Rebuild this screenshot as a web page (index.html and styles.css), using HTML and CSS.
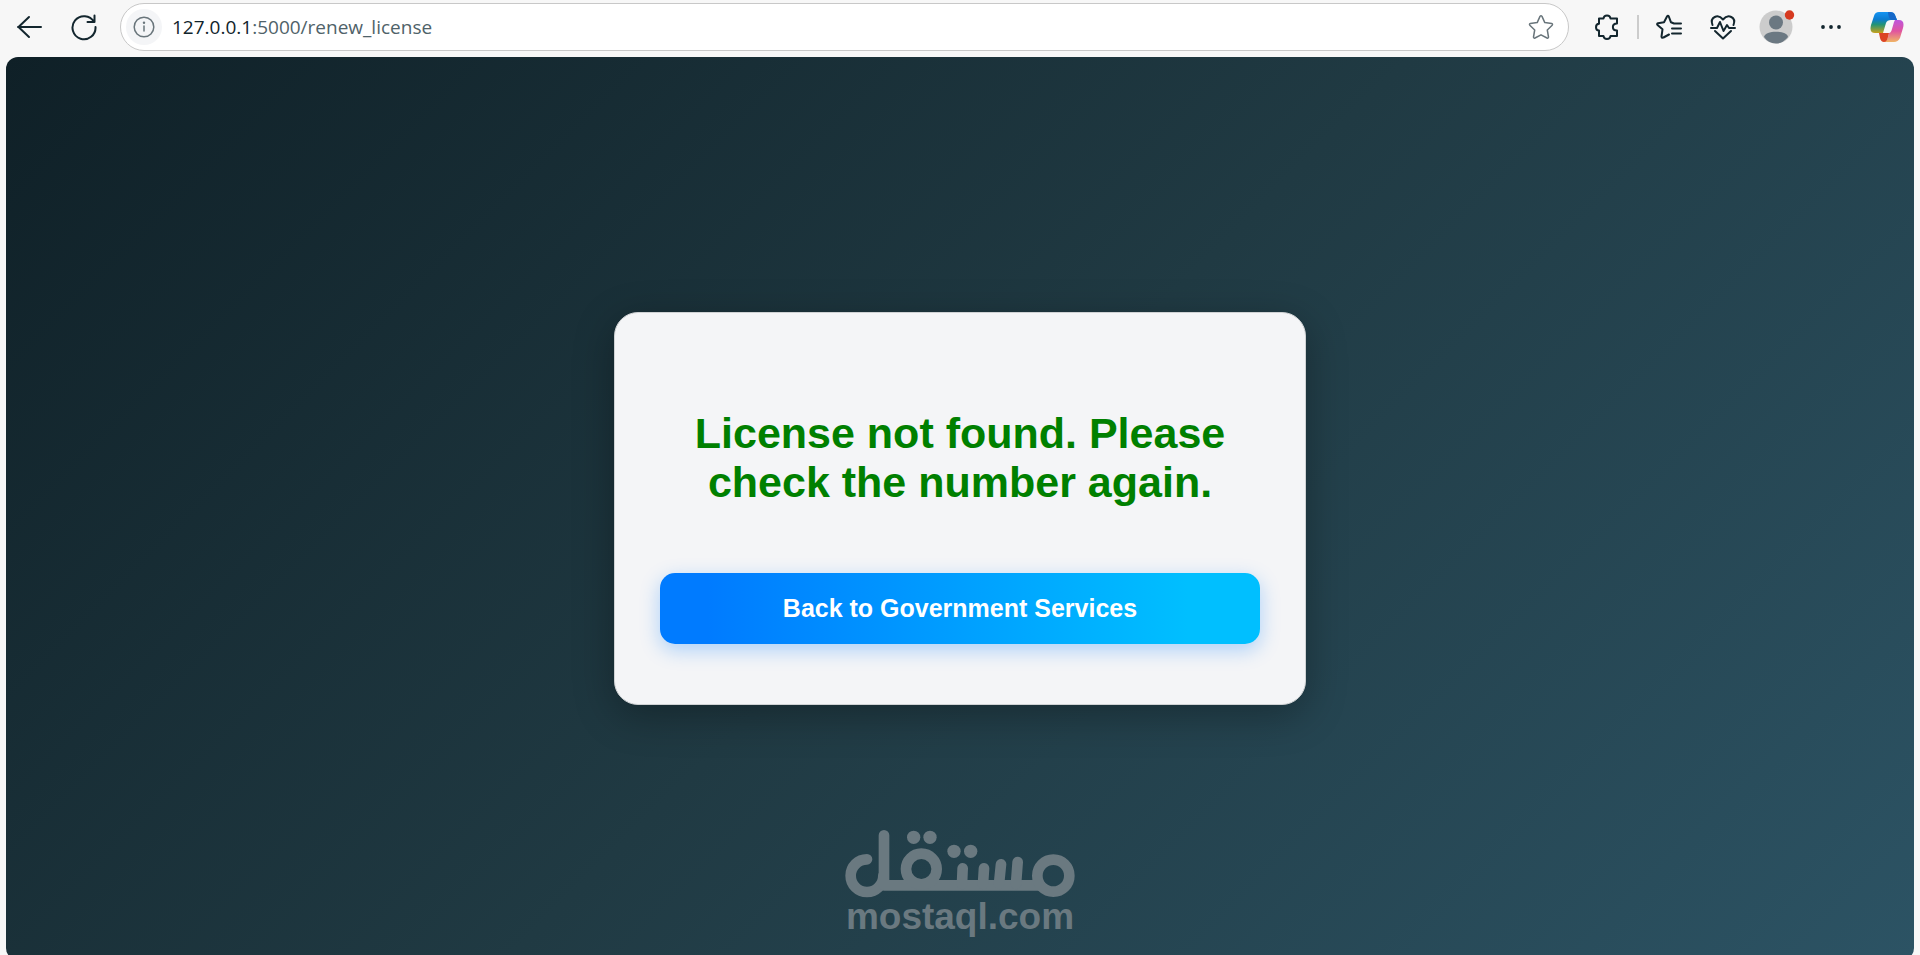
FILE: index.html
```html
<!DOCTYPE html>
<html lang="en">
<head>
<meta charset="utf-8">
<title>Renew License</title>
<link rel="stylesheet" href="styles.css">
</head>
<body>
<header class="toolbar">
  <button class="tool" aria-label="Back"><svg width="28" height="28" viewBox="0 0 28 28"><path d="M25 14H2M13 4L2.500 14L13 24"/></svg></button>
  <button class="tool" aria-label="Refresh"><svg width="28" height="28" viewBox="0 0 28 28"><path d="M24 9A11.500 11.500 0 1 0 25.500 14M24.500 2.500V9H17.500"/></svg></button>
  <form class="address">
    <button type="button" class="info" aria-label="Site information"><svg width="22" height="22" viewBox="0 0 22 22"><circle cx="11" cy="11" r="9.800"/><path d="M11 10V15"/><circle class="solid" cx="11" cy="6.800" r="1.200"/></svg></button>
    <span class="url"><b>127.0.0.1</b>:5000/renew_license</span>
    <button type="button" class="favorite" aria-label="Add to favorites"><svg width="26" height="26" viewBox="0 0 26 26"><path d="M12 2.400Q13 1 14 2.400L16.800 8.600L23.700 9.500Q25 10 24.200 11.200L19.300 16L20.500 23Q20.400 24.500 19 24L13 20.800L7 24Q5.600 24.500 5.500 23L6.700 16L1.800 11.200Q1 10 2.300 9.500L9.200 8.600Z"/></svg></button>
  </form>
  <nav class="actions">
    <button class="tool" aria-label="Extensions"><svg width="28" height="28" viewBox="0 0 28 28"><path d="M6 5.500H10.500C11 1.500 17 1.500 17.500 5.500H24V10.500C18.500 10.500 18.500 17.500 24 17.500V23H17.500C17 27 11 27 10.500 23H6V17.500C2 17.500 2 11 6 10.800V5.500Z"/></svg></button>
    <span class="divider"></span>
    <button class="tool" aria-label="Favorites"><svg width="28" height="28" viewBox="0 0 28 28"><path d="M26 10.500H19L16 9.300L13.800 3.500Q13 1.800 12 3.500L9 9.300L3 10.200Q1.500 10.700 2.500 12L7.500 16.300L6.500 23.500Q6.800 25.500 8.500 24.500L14 21.500M17 15.500H26M17 20.500H26"/></svg></button>
    <button class="tool" aria-label="Browser essentials"><svg width="28" height="28" viewBox="0 0 28 28"><path d="M3.500 12C0.500 4 9 0.500 14 6.500C19 0.500 27.500 4 24.500 12M2 15H8L11 9L14.500 18L18 12L20 15H26M6 18L14 25.500L22 18"/></svg></button>
    <button class="tool profile" aria-label="Profile"><svg width="36" height="36" viewBox="0 0 36 36"><circle cx="17" cy="18" r="16.500" fill="#ccc"/><circle cx="17" cy="13.500" r="7" fill="#6b7882"/><path d="M5 28C6 21 28 21 29 28Q24 34.500 17 34.500Q9 34 5 28Z" fill="#6b7882"/><circle cx="30.500" cy="6" r="4.700" fill="#d63a20"/></svg></button>
    <button class="tool more" aria-label="More"><svg width="28" height="28" viewBox="0 0 28 28"><g class="solid"><circle cx="6" cy="14" r="1.900"/><circle cx="14" cy="14" r="1.900"/><circle cx="22" cy="14" r="1.900"/></g></svg></button>
    <button class="tool copilot" aria-label="Copilot"><svg width="34" height="32" viewBox="0 0 34 32">
      <defs>
        <linearGradient id="cool" x2="0" y2="1"><stop offset="0" stop-color="#1594f2"/><stop offset=".35" stop-color="#0c7cd0"/><stop offset=".6" stop-color="#239475"/><stop offset="1" stop-color="#c8a21c"/></linearGradient>
        <linearGradient id="warm" x2="0" y2="1"><stop offset="0" stop-color="#bd55de"/><stop offset=".5" stop-color="#e0549f"/><stop offset="1" stop-color="#f0b565"/></linearGradient>
      </defs>
      <path d="M9 1H20Q24 1 25 4L27 9H21Q17 9 16 12L13 22H5Q-1 22 1 14L4 5Q5 1 9 1Z" fill="url(#cool)"/>
      <path d="M18 1H20Q24 1 25 4L27 9H21Q18 6 18 1Z" fill="#1668c8"/>
      <path d="M25 9H29Q35 9 33 17L30 27Q28 31 24 31H14Q17 30 18 26L19 22Q21 22 22 18L24 11Z" fill="url(#warm)"/>
      <path d="M9 22H19L18 26Q17 31 14 31Q11 31 10 27Z" fill="#dc4424"/>
    </svg></button>
  </nav>
</header>
<main class="page">
  <section class="card">
    <h1 class="message">License not found. Please check the number again.</h1>
    <a class="back" href="#">Back to Government Services</a>
  </section>
  <div class="watermark">
    <svg width="230" height="68" viewBox="75 60 690 204" role="img" aria-label="مستقل">
      <g class="strokes">
        <path d="M141 148A49 49 0 1 0 190 197"/><path d="M192 76V226H660" stroke-linejoin="round"/>
        <circle cx="700" cy="197" r="48"/><circle cx="304" cy="177" r="46"/>
        <path d="M593 156L588 222M543 163L537 222M492 175L489 222M428 175L426 222"/>
      </g>
      <g class="dots"><circle cx="281" cy="82" r="20"/><circle cx="330" cy="82" r="20"/><circle cx="402" cy="124" r="20"/><circle cx="452" cy="124" r="20"/></g>
    </svg>
    <span class="domain">mostaql.com</span>
  </div>
</main>
</body>
</html>
```
FILE: styles.css
```css
* { box-sizing: border-box; }

body {
  margin: 0;
  height: 100vh;
  overflow: hidden;
  display: flex;
  flex-direction: column;
  background: #f7f7f7;
  font-family: "Liberation Sans", Arial, sans-serif;
}

button {
  padding: 0;
  border: 0;
  background: none;
  display: flex;
  align-items: center;
  justify-content: center;
}

svg { display: block; }

.toolbar {
  flex: none;
  display: flex;
  align-items: center;
  height: 57px;
  padding: 0 16px 3px;
}

.tool {
  width: 28px;
  height: 28px;
  margin-right: 26px;
  color: #13262e;
}

.tool svg, .address svg {
  flex: none;
  fill: none;
  stroke: currentColor;
  stroke-width: 2;
  stroke-linecap: round;
  stroke-linejoin: round;
}

.tool .solid, .address .solid { fill: currentColor; stroke: none; }

.address {
  flex: 1;
  display: flex;
  align-items: center;
  height: 48px;
  margin: 0 24px 0 -4px;
  padding: 0 14px 0 5px;
  background: #fff;
  border: 1px solid #c8c8c8;
  border-radius: 24px;
}

.info {
  width: 36px;
  height: 36px;
  border-radius: 18px;
  background: #f4f5f7;
  color: #69757b;
}

.url {
  flex: 1;
  margin-left: 10px;
  font: 19px "Open Sans", "Noto Sans", sans-serif;
  color: #4f6269;
}

.url b { font-weight: 400; color: #10242b; }

.favorite { color: #69757b; }
.favorite svg, .info svg { stroke-width: 1.500; }

.actions { display: flex; align-items: center; }

.divider {
  width: 2px;
  height: 24px;
  margin: 0 16px 0 -10px;
  background: #ccc;
}

.actions .profile svg, .actions .copilot svg { stroke: none; }
.actions .more { margin-right: 28px; }
.actions .copilot { margin-right: 3px; }

.page {
  position: relative;
  flex: 1 0 auto;
  display: flex;
  align-items: center;
  justify-content: center;
  margin: 0 6px -5px;
  min-height: calc(100vh - 52px);
  border-radius: 12px;
  background: linear-gradient(135deg, #0f2027, #203a43, #2c5364);
}

.card {
  width: 692px;
  max-width: 100%;
  padding: 45px;
  border: 1px solid #cfd2d4;
  border-radius: 24px;
  background: #f4f5f7;
  box-shadow: 0 10px 40px rgba(0, 0, 0, 0.3);
  text-align: center;
}

.message {
  margin: 51px 0 66px;
  font-size: 43px;
  line-height: 49px;
  color: #008000;
}

.back {
  display: block;
  margin-bottom: 15px;
  padding: 20px;
  border-radius: 15px;
  background: linear-gradient(90deg, #007bff 8%, #00bfff 88%);
  box-shadow: 0 6px 20px rgba(0, 123, 255, 0.3);
  color: #fff;
  font-size: 25px;
  font-weight: 700;
  line-height: 31px;
  text-decoration: none;
}

.watermark {
  position: absolute;
  left: 0;
  right: 0;
  bottom: 24px;
  display: flex;
  flex-direction: column;
  align-items: center;
  color: #6a7980;
  pointer-events: none;
}

.strokes {
  fill: none;
  stroke: currentColor;
  stroke-width: 32;
  stroke-linecap: round;
}

.dots { fill: currentColor; }

.domain {
  font-size: 37px;
  font-weight: 700;
  line-height: 38px;
}
```
